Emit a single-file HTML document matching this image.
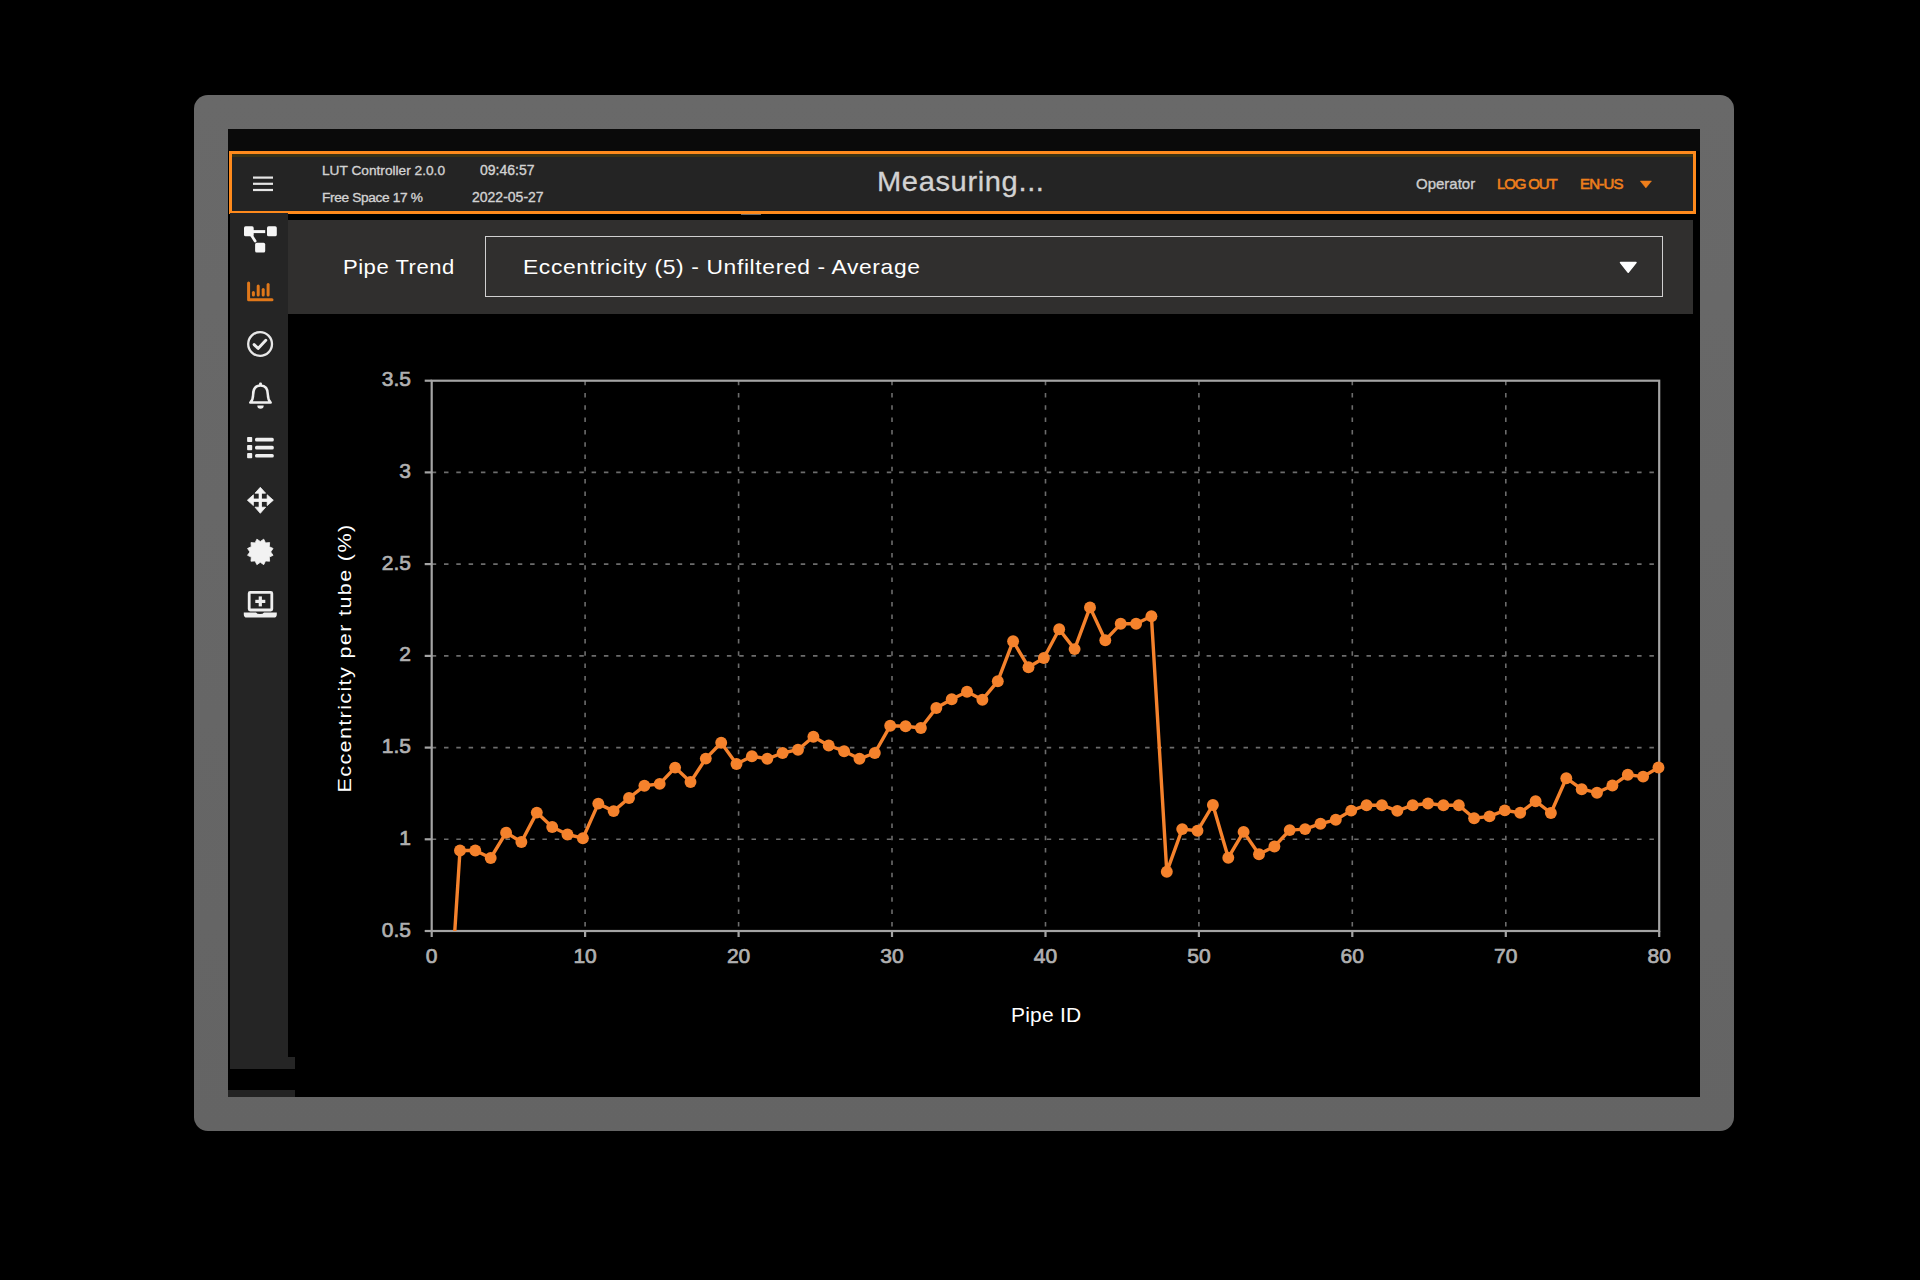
<!DOCTYPE html>
<html><head><meta charset="utf-8">
<style>
html,body{margin:0;padding:0;width:1920px;height:1280px;background:#000;overflow:hidden;font-family:"Liberation Sans",sans-serif;}
.a{position:absolute;}
#frame{left:194px;top:95px;width:1540px;height:1036px;background:linear-gradient(#696969,#646464);border-radius:14px;}
#screen{left:228px;top:129px;width:1472px;height:968px;background:#000;}
#strip{left:228px;top:129px;width:1472px;height:22px;background:#0a0a0a;}
#topbar{left:229px;top:151px;width:1461px;height:56.6px;border:3px solid #ff8a1c;background:#242424;}
#sidebar{left:230px;top:213px;width:58px;height:856px;background:#252525;}
#sbstep{left:230px;top:1057px;width:65px;height:12px;background:#252525;}
#sbstrip{left:228px;top:1090px;width:67px;height:7px;background:#232323;}
#ptbar{left:288px;top:220.3px;width:1405px;height:93.5px;background:#302f2e;}
#dd{left:485px;top:236px;width:1176px;height:59px;border:1.7px solid #d0d0d0;}
.t{position:absolute;white-space:nowrap;line-height:1;}
.m{-webkit-text-stroke:0.35px currentColor;}
.chart{position:absolute;left:0;top:0;}
</style></head><body>
<div class="a" id="frame"></div>
<div class="a" id="screen"></div>
<div class="a" id="strip"></div>
<div class="a" id="topbar"></div>
<div class="a" style="left:232px;top:154.2px;width:1461px;height:3.2px;background:#3a3315;"></div>
<div class="a" style="left:740.6px;top:213.6px;width:20px;height:1.2px;background:#6a6a6a;"></div>
<div class="a" id="sidebar"></div>
<div class="a" id="sbstep"></div>
<div class="a" id="sbstrip"></div>
<div class="a" id="ptbar"></div>
<div class="a" id="dd"></div>
<!-- topbar contents -->
<div class="t m" style="left:322px;top:164px;font-size:13.7px;color:#d2d2d2;">LUT Controller 2.0.0</div>
<div class="t m" style="left:322px;top:191px;font-size:13.7px;color:#d2d2d2;letter-spacing:-0.35px;">Free Space 17 %</div>
<div class="t m" style="left:480px;top:163px;font-size:14px;color:#d2d2d2;">09:46:57</div>
<div class="t m" style="left:472px;top:190px;font-size:14px;color:#d2d2d2;">2022-05-27</div>
<div class="t" style="left:877px;top:168px;font-size:27.5px;color:#d2d2d2;letter-spacing:0.6px;-webkit-text-stroke:0.3px #d2d2d2;transform-origin:0 50%;transform:scaleX(1.057);">Measuring...</div>
<div class="t m" style="left:1416px;top:176px;font-size:15px;color:#cdcdcd;">Operator</div>
<div class="t m" style="left:1497px;top:176px;font-size:15px;color:#ee7f1c;letter-spacing:-1.15px;-webkit-text-stroke:0.6px #ee7f1c;">LOG OUT</div>
<div class="t m" style="left:1580px;top:176px;font-size:15px;color:#ee7f1c;letter-spacing:-0.8px;-webkit-text-stroke:0.6px #ee7f1c;">EN-US</div>
<div class="t" style="left:342.5px;top:256.4px;font-size:21px;color:#fff;letter-spacing:0.5px;transform-origin:0 50%;transform:scaleX(1.048);">Pipe Trend</div>
<div class="t" style="left:522.5px;top:256.4px;font-size:21px;color:#fff;letter-spacing:0.6px;transform-origin:0 50%;transform:scaleX(1.086);">Eccentricity (5) - Unfiltered - Average</div>
<div class="t" style="left:1010.5px;top:1005px;font-size:20px;color:#fff;letter-spacing:0.2px;transform-origin:0 50%;transform:scaleX(1.05);">Pipe ID</div>
<svg class="chart" width="1920" height="1280" viewBox="0 0 1920 1280">
<defs><clipPath id="pc"><rect x="431.7" y="380.7" width="1227.5" height="550.3"/></clipPath></defs>
<g stroke="#6c6c6c" stroke-width="1.6" stroke-dasharray="4.5 7.8" fill="none"><line x1="585.1" y1="380.7" x2="585.1" y2="931.0"/><line x1="738.6" y1="380.7" x2="738.6" y2="931.0"/><line x1="892.0" y1="380.7" x2="892.0" y2="931.0"/><line x1="1045.5" y1="380.7" x2="1045.5" y2="931.0"/><line x1="1198.9" y1="380.7" x2="1198.9" y2="931.0"/><line x1="1352.3" y1="380.7" x2="1352.3" y2="931.0"/><line x1="1505.8" y1="380.7" x2="1505.8" y2="931.0"/><line x1="431.7" y1="839.3" x2="1659.2" y2="839.3"/><line x1="431.7" y1="747.6" x2="1659.2" y2="747.6"/><line x1="431.7" y1="655.9" x2="1659.2" y2="655.9"/><line x1="431.7" y1="564.1" x2="1659.2" y2="564.1"/><line x1="431.7" y1="472.4" x2="1659.2" y2="472.4"/></g>
<g stroke="#a4a4a4" stroke-width="2.2" fill="none"><rect x="431.7" y="380.7" width="1227.5" height="550.3"/><line x1="431.7" y1="931.0" x2="431.7" y2="937.0"/><line x1="585.1" y1="931.0" x2="585.1" y2="937.0"/><line x1="738.6" y1="931.0" x2="738.6" y2="937.0"/><line x1="892.0" y1="931.0" x2="892.0" y2="937.0"/><line x1="1045.5" y1="931.0" x2="1045.5" y2="937.0"/><line x1="1198.9" y1="931.0" x2="1198.9" y2="937.0"/><line x1="1352.3" y1="931.0" x2="1352.3" y2="937.0"/><line x1="1505.8" y1="931.0" x2="1505.8" y2="937.0"/><line x1="1659.2" y1="931.0" x2="1659.2" y2="937.0"/><line x1="424.7" y1="931.0" x2="431.7" y2="931.0"/><line x1="424.7" y1="839.3" x2="431.7" y2="839.3"/><line x1="424.7" y1="747.6" x2="431.7" y2="747.6"/><line x1="424.7" y1="655.9" x2="431.7" y2="655.9"/><line x1="424.7" y1="564.1" x2="431.7" y2="564.1"/><line x1="424.7" y1="472.4" x2="431.7" y2="472.4"/><line x1="424.7" y1="380.7" x2="431.7" y2="380.7"/></g>
<g fill="#b0b0b0" stroke="#b0b0b0" stroke-width="0.7" font-family="Liberation Sans, sans-serif" font-size="21"><text x="431.7" y="963" text-anchor="middle">0</text><text x="585.1" y="963" text-anchor="middle">10</text><text x="738.6" y="963" text-anchor="middle">20</text><text x="892.0" y="963" text-anchor="middle">30</text><text x="1045.5" y="963" text-anchor="middle">40</text><text x="1198.9" y="963" text-anchor="middle">50</text><text x="1352.3" y="963" text-anchor="middle">60</text><text x="1505.8" y="963" text-anchor="middle">70</text><text x="1659.2" y="963" text-anchor="middle">80</text><text x="411" y="936.5" text-anchor="end">0.5</text><text x="411" y="844.8" text-anchor="end">1</text><text x="411" y="753.1" text-anchor="end">1.5</text><text x="411" y="661.4" text-anchor="end">2</text><text x="411" y="569.6" text-anchor="end">2.5</text><text x="411" y="477.9" text-anchor="end">3</text><text x="411" y="386.2" text-anchor="end">3.5</text></g>
<g clip-path="url(#pc)"><path d="M444.6,1088.5 L460.0,850.5 L475.3,850.5 L490.7,858.0 L506.1,832.7 L521.4,842.0 L536.8,812.6 L552.2,827.0 L567.5,834.5 L582.9,838.2 L598.3,803.6 L613.6,811.1 L629.0,798.0 L644.4,785.8 L659.7,783.9 L675.1,767.6 L690.5,782.0 L705.8,758.6 L721.2,742.7 L736.5,764.0 L751.9,756.2 L767.3,758.8 L782.6,753.0 L798.0,749.7 L813.4,736.8 L828.7,745.5 L844.1,751.2 L859.5,758.8 L874.8,753.0 L890.2,725.8 L905.6,726.2 L920.9,728.0 L936.3,708.0 L951.7,699.2 L967.0,691.8 L982.4,699.7 L997.8,681.2 L1013.1,641.2 L1028.5,667.2 L1043.9,658.0 L1059.2,629.2 L1074.6,649.1 L1090.0,607.4 L1105.3,640.2 L1120.7,623.8 L1136.1,623.8 L1151.4,616.2 L1166.8,871.8 L1182.2,829.1 L1197.5,830.8 L1212.9,805.0 L1228.3,857.7 L1243.6,831.9 L1259.0,854.2 L1274.4,846.5 L1289.7,830.1 L1305.1,829.1 L1320.5,823.7 L1335.8,819.8 L1351.2,810.6 L1366.6,805.2 L1381.9,805.2 L1397.3,810.9 L1412.7,805.2 L1428.0,803.5 L1443.4,805.2 L1458.8,805.2 L1474.1,818.2 L1489.5,816.4 L1504.8,810.4 L1520.2,812.7 L1535.6,801.2 L1550.9,813.0 L1566.3,778.2 L1581.7,789.2 L1597.0,792.7 L1612.4,785.5 L1627.8,774.8 L1643.1,776.6 L1658.5,767.5" stroke="#f5822c" stroke-width="3.4" fill="none" stroke-linejoin="round"/></g>
<g fill="#f5822c"><circle cx="460.0" cy="850.5" r="5.95"/><circle cx="475.3" cy="850.5" r="5.95"/><circle cx="490.7" cy="858.0" r="5.95"/><circle cx="506.1" cy="832.7" r="5.95"/><circle cx="521.4" cy="842.0" r="5.95"/><circle cx="536.8" cy="812.6" r="5.95"/><circle cx="552.2" cy="827.0" r="5.95"/><circle cx="567.5" cy="834.5" r="5.95"/><circle cx="582.9" cy="838.2" r="5.95"/><circle cx="598.3" cy="803.6" r="5.95"/><circle cx="613.6" cy="811.1" r="5.95"/><circle cx="629.0" cy="798.0" r="5.95"/><circle cx="644.4" cy="785.8" r="5.95"/><circle cx="659.7" cy="783.9" r="5.95"/><circle cx="675.1" cy="767.6" r="5.95"/><circle cx="690.5" cy="782.0" r="5.95"/><circle cx="705.8" cy="758.6" r="5.95"/><circle cx="721.2" cy="742.7" r="5.95"/><circle cx="736.5" cy="764.0" r="5.95"/><circle cx="751.9" cy="756.2" r="5.95"/><circle cx="767.3" cy="758.8" r="5.95"/><circle cx="782.6" cy="753.0" r="5.95"/><circle cx="798.0" cy="749.7" r="5.95"/><circle cx="813.4" cy="736.8" r="5.95"/><circle cx="828.7" cy="745.5" r="5.95"/><circle cx="844.1" cy="751.2" r="5.95"/><circle cx="859.5" cy="758.8" r="5.95"/><circle cx="874.8" cy="753.0" r="5.95"/><circle cx="890.2" cy="725.8" r="5.95"/><circle cx="905.6" cy="726.2" r="5.95"/><circle cx="920.9" cy="728.0" r="5.95"/><circle cx="936.3" cy="708.0" r="5.95"/><circle cx="951.7" cy="699.2" r="5.95"/><circle cx="967.0" cy="691.8" r="5.95"/><circle cx="982.4" cy="699.7" r="5.95"/><circle cx="997.8" cy="681.2" r="5.95"/><circle cx="1013.1" cy="641.2" r="5.95"/><circle cx="1028.5" cy="667.2" r="5.95"/><circle cx="1043.9" cy="658.0" r="5.95"/><circle cx="1059.2" cy="629.2" r="5.95"/><circle cx="1074.6" cy="649.1" r="5.95"/><circle cx="1090.0" cy="607.4" r="5.95"/><circle cx="1105.3" cy="640.2" r="5.95"/><circle cx="1120.7" cy="623.8" r="5.95"/><circle cx="1136.1" cy="623.8" r="5.95"/><circle cx="1151.4" cy="616.2" r="5.95"/><circle cx="1166.8" cy="871.8" r="5.95"/><circle cx="1182.2" cy="829.1" r="5.95"/><circle cx="1197.5" cy="830.8" r="5.95"/><circle cx="1212.9" cy="805.0" r="5.95"/><circle cx="1228.3" cy="857.7" r="5.95"/><circle cx="1243.6" cy="831.9" r="5.95"/><circle cx="1259.0" cy="854.2" r="5.95"/><circle cx="1274.4" cy="846.5" r="5.95"/><circle cx="1289.7" cy="830.1" r="5.95"/><circle cx="1305.1" cy="829.1" r="5.95"/><circle cx="1320.5" cy="823.7" r="5.95"/><circle cx="1335.8" cy="819.8" r="5.95"/><circle cx="1351.2" cy="810.6" r="5.95"/><circle cx="1366.6" cy="805.2" r="5.95"/><circle cx="1381.9" cy="805.2" r="5.95"/><circle cx="1397.3" cy="810.9" r="5.95"/><circle cx="1412.7" cy="805.2" r="5.95"/><circle cx="1428.0" cy="803.5" r="5.95"/><circle cx="1443.4" cy="805.2" r="5.95"/><circle cx="1458.8" cy="805.2" r="5.95"/><circle cx="1474.1" cy="818.2" r="5.95"/><circle cx="1489.5" cy="816.4" r="5.95"/><circle cx="1504.8" cy="810.4" r="5.95"/><circle cx="1520.2" cy="812.7" r="5.95"/><circle cx="1535.6" cy="801.2" r="5.95"/><circle cx="1550.9" cy="813.0" r="5.95"/><circle cx="1566.3" cy="778.2" r="5.95"/><circle cx="1581.7" cy="789.2" r="5.95"/><circle cx="1597.0" cy="792.7" r="5.95"/><circle cx="1612.4" cy="785.5" r="5.95"/><circle cx="1627.8" cy="774.8" r="5.95"/><circle cx="1643.1" cy="776.6" r="5.95"/><circle cx="1658.5" cy="767.5" r="5.95"/></g>
</svg><svg class="a" style="left:0;top:0;" width="1920" height="1280" viewBox="0 0 1920 1280">
<!-- hamburger -->
<g fill="#e6e6e6"><rect x="253" y="176.5" width="20" height="2.2"/><rect x="253" y="182.7" width="20" height="2.2"/><rect x="253" y="188.9" width="20" height="2.2"/></g>
<!-- tree icon -->
<g fill="#f6f6f6">
<rect x="244" y="226.3" width="9.7" height="10" rx="1.6"/>
<rect x="267" y="226.3" width="9.8" height="10" rx="1.6"/>
<rect x="255.1" y="242.8" width="10.1" height="9.8" rx="1.6"/>
<rect x="252" y="230.1" width="13.2" height="3"/>
</g>
<line x1="251.3" y1="235" x2="255.1" y2="241.1" stroke="#f6f6f6" stroke-width="2.8" stroke-linecap="round"/>
<!-- chart icon -->
<g fill="none" stroke="#e0781a" stroke-width="3" stroke-linecap="round" stroke-linejoin="round">
<path d="M248.6,283 V299.8 H272"/>
<path d="M253.4,292.5 V295"/><path d="M258.2,286 V295"/><path d="M263.2,289.6 V295"/><path d="M268.1,284.5 V295"/>
</g>
<!-- check circle -->
<circle cx="260.1" cy="344" r="11.9" fill="none" stroke="#e8e8e8" stroke-width="2.3"/>
<path d="M254.1,344.6 L258.1,348.4 L265.8,340.2" fill="none" stroke="#ededed" stroke-width="2.9" stroke-linecap="round" stroke-linejoin="round"/>
<!-- bell -->
<g transform="translate(0.5,0)">
<g fill="none" stroke="#efefef" stroke-width="2.5" stroke-linejoin="round">
<path d="M260,385.5 C254,385.5 252.6,390.5 252.6,395 C252.6,398.5 251.8,400.5 249.8,402.6 L270.2,402.6 C268.2,400.5 267.4,398.5 267.4,395 C267.4,390.5 266,385.5 260,385.5 Z"/>
</g>
<g fill="#efefef"><rect x="258.6" y="382.4" width="2.8" height="3.5" rx="1"/><path d="M256.8,405.6 A3.2,3.2 0 0 0 263.2,405.6 Z"/></g>
</g>
<!-- list -->
<g fill="#efefef">
<rect x="247.1" y="436.9" width="5.1" height="5.2" rx="0.8"/><rect x="247.1" y="445" width="5.1" height="5.2" rx="0.8"/><rect x="247.1" y="453.1" width="5.1" height="5.2" rx="0.8"/>
<rect x="255" y="437.8" width="18.8" height="3.6" rx="1.5"/><rect x="255" y="445.8" width="18.8" height="3.6" rx="1.5"/><rect x="255" y="453.9" width="18.8" height="3.6" rx="1.5"/>
</g>
<!-- move icon -->
<g fill="#f4f4f4" stroke="#f4f4f4" stroke-width="0.8" stroke-linejoin="round">
<rect x="258.7" y="491" width="3.2" height="18" stroke="none"/><rect x="251" y="498.6" width="18" height="3.3" stroke="none"/>
<path d="M260.3,487.3 L265.6,493.2 L255,493.2 Z"/>
<path d="M260.3,513.3 L265.6,507.2 L255,507.2 Z"/>
<path d="M247.4,500.2 L253.4,494.8 L253.4,505.6 Z"/>
<path d="M273.3,500.2 L267.2,494.8 L267.2,505.6 Z"/>
</g>
<!-- burst -->
<g fill="#f2f2f2"><path id="burst" d="M263.72,539.15 L265.50,542.89 L269.63,542.57 L269.31,546.70 L273.05,548.48 L270.70,551.90 L273.05,555.32 L269.31,557.10 L269.63,561.23 L265.50,560.91 L263.72,564.65 L260.30,562.30 L256.88,564.65 L255.10,560.91 L250.97,561.23 L251.29,557.10 L247.55,555.32 L249.90,551.90 L247.55,548.48 L251.29,546.70 L250.97,542.57 L255.10,542.89 L256.88,539.15 L260.30,541.50 Z" stroke="#f2f2f2" stroke-width="0.8" stroke-linejoin="round"/></g>
<!-- laptop -->
<g fill="none" stroke="#efefef" stroke-width="2.8">
<rect x="249.2" y="592.4" width="22.6" height="17.6" rx="1"/>
</g>
<g fill="#efefef">
<rect x="258.7" y="596.4" width="3.2" height="10"/><rect x="255.3" y="599.8" width="10" height="3.2"/>
<path d="M243.8,612.4 H256 Q257,614 260,614 Q263,614 264,612.4 H276.8 V614.5 Q276.8,617.6 273.8,617.6 H246.8 Q243.8,617.6 243.8,614.5 Z"/>
</g>
<!-- dropdown arrow -->
<path d="M1620.5,262.6 L1636,262.6 L1628.2,272.2 Z" fill="#fff" stroke="#fff" stroke-width="1.5" stroke-linejoin="round"/>
<!-- en-us arrow -->
<path d="M1640.3,181 L1651.5,181 L1645.9,187.9 Z" fill="#ee7f1c" stroke="#ee7f1c" stroke-width="0.5" stroke-linejoin="round"/>
</svg>
<div class="t" style="left:344px;top:658px;font-size:19px;color:#fff;letter-spacing:1.2px;transform:translate(-50%,-50%) rotate(-90deg) scaleX(1.135);">Eccentricity per tube (%)</div>
</body></html>
